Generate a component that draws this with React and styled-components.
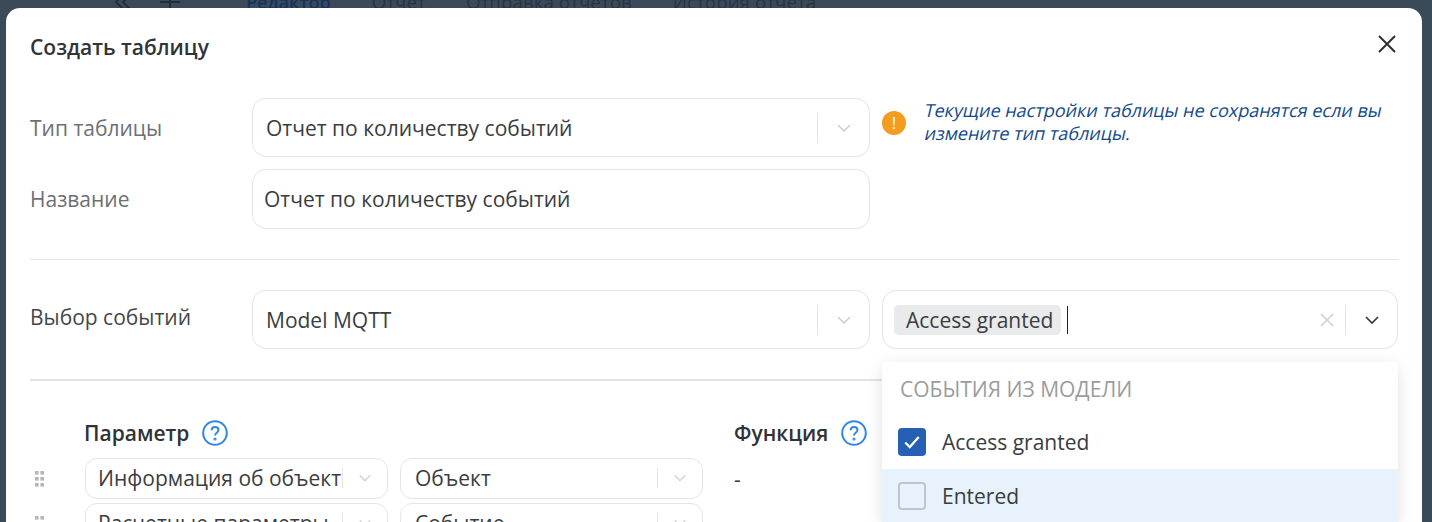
import React from 'react'
import styled, { createGlobalStyle } from 'styled-components'

const Global = createGlobalStyle`
  html, body {
    margin: 0;
    padding: 0;
    background: #3b4a59;
  }
  body {
    font-family: "Open Sans", "Liberation Sans", sans-serif;
    color: #33363a;
  }
`

const Page = styled.div`
  position: relative;
  width: 1432px;
  height: 522px;
  overflow: hidden;
  background: #3b4a59;
`

const BackTabs = styled.div`
  position: absolute;
  top: -10px;
  left: 0;
  display: flex;
  align-items: center;
  font-size: 18.8px;
  line-height: 24px;
  color: #222f3b;
`

const BackIcon = styled.svg`
  width: 24px;
  height: 24px;
  fill: none;
  stroke: #222f3b;
  stroke-width: 2;
  margin-left: ${p => p.$left}px;
`

const BackTab = styled.span`
  margin-left: ${p => p.$left}px;
  font-size: ${p => (p.$active ? '18px' : '18.8px')};
  font-weight: ${p => (p.$active ? 600 : 400)};
  color: ${p => (p.$active ? '#14345f' : '#263442')};
`

const Modal = styled.div`
  position: absolute;
  top: 8px;
  left: 6px;
  width: 1416px;
  height: 560px;
  box-sizing: border-box;
  padding: 0 24px;
  background: #fff;
  border-radius: 14px;
`

const Header = styled.div`
  display: flex;
  align-items: center;
  justify-content: space-between;
  height: 90px;
  padding-bottom: 12px;
  box-sizing: border-box;
`

const Title = styled.h2`
  margin: 0;
  font-size: 21px;
  font-weight: 600;
  color: #303337;
`

const Close = styled.svg`
  width: 18px;
  height: 18px;
  margin: -6px 2px 0 0;
  stroke: #2c2f33;
  stroke-width: 2;
  fill: none;
`

const Row = styled.div`
  display: grid;
  grid-template-columns: 222px 618px 528px;
  align-items: center;
  margin-bottom: ${p => p.$gap || 0}px;
`

const Label = styled.div`
  font-size: 21px;
  color: ${p => p.$dark ? '#44474b' : '#6c7075'};
  margin-top: ${p => p.$shift || 0}px;
`

const Field = styled.div`
  display: flex;
  align-items: center;
  box-sizing: border-box;
  height: ${p => p.$h || 59}px;
  border: 1px solid #e4e5e7;
  border-radius: ${p => p.$r || 14}px;
  background: #fff;
  padding-left: ${p => p.$pl || 13}px;
  font-size: 21px;
  color: #3a3d41;
  white-space: nowrap;
  overflow: hidden;
`

const FieldText = styled.span`
  flex: 1;
  min-width: 0;
  overflow: hidden;
`

const Sep = styled.span`
  flex: none;
  width: 1px;
  height: ${p => p.$h || 30}px;
  background: #e4e5e7;
`

const Chevron = styled.svg`
  flex: none;
  width: ${p => p.$s || 16}px;
  height: ${p => p.$s || 16}px;
  margin: 0 ${p => p.$m || 17}px 0 ${p => p.$m || 18}px;
  fill: none;
  stroke: ${p => p.$dark ? '#33363a' : '#c9cbce'};
  stroke-width: ${p => p.$dark ? 1.6 : 1.4};
`

const Note = styled.div`
  display: flex;
  align-items: center;
  margin-left: 12px;
`

const WarnIcon = styled.div`
  flex: none;
  width: 24px;
  height: 24px;
  border-radius: 50%;
  background: #f39c1f;
  color: #fff;
  font-size: 17px;
  font-weight: 400;
  line-height: 24px;
  text-align: center;
  position: relative;
  top: -5px;
`

const NoteText = styled.div`
  margin-left: 19px;
  font-size: 18px;
  line-height: 23px;
  color: #114a8b;
  position: relative;
  top: -6px;
`

/* reference text is a slanted regular face, not the real italic */
const NoteLine = styled.span`
  display: block;
  width: max-content;
  transform: skewX(-13deg);
  transform-origin: left center;
`

const Divider = styled.hr`
  margin: ${p => p.$strong ? '30px 0 29px' : '30px 0'};
  border: 0;
  height: ${p => p.$strong ? 2 : 1}px;
  background: ${p => p.$strong ? '#e2e3e5' : '#e4e5e7'};
`

const MultiWrap = styled.div`
  position: relative;
  margin-left: 12px;
`

const Multi = styled(Field)`
  padding-left: 11px;
  overflow: visible;
`

const Tag = styled.span`
  flex: none;
  height: 30px;
  line-height: 30px;
  padding: 0 8px 0 12px;
  border-radius: 5px;
  background: #e9eaeb;
`

const Caret = styled.span`
  flex: none;
  width: 1px;
  height: 28px;
  margin-left: 6px;
  background: #222;
`

const Spacer = styled.span`
  flex: 1;
`

const ClearIcon = styled.svg`
  flex: none;
  width: 14px;
  height: 14px;
  margin-right: 11px;
  stroke: #c9cbce;
  stroke-width: 1.4;
  fill: none;
`

const Menu = styled.div`
  position: absolute;
  top: 72px;
  left: 0;
  right: 0;
  background: #fff;
  box-shadow: 0 4px 16px rgba(40, 50, 60, 0.14);
  border-radius: 4px 4px 0 0;
`

const MenuHead = styled.div`
  padding: 12px 18px 0;
  height: 53px;
  box-sizing: border-box;
  font-size: 21px;
  line-height: 30px;
  color: #9a9c9e;
`

const Option = styled.div`
  display: flex;
  align-items: center;
  height: 54px;
  padding-left: 16px;
  font-size: 21px;
  color: #3a3d41;
  background: ${p => p.$hover ? '#e8f2fc' : '#fff'};
`

const Check = styled.span`
  flex: none;
  display: flex;
  align-items: center;
  justify-content: center;
  box-sizing: border-box;
  width: 28px;
  height: 28px;
  margin-right: 16px;
  border-radius: 4px;
  background: ${p => p.$on ? '#2560b4' : 'transparent'};
  border: ${p => p.$on ? 'none' : '2px solid #bcc5d0'};
`

const CheckMark = styled.svg`
  width: 18px;
  height: 18px;
  fill: none;
  stroke: #fff;
  stroke-width: 2;
`

const ParamHead = styled.div`
  display: grid;
  grid-template-columns: 650px auto;
  padding-left: 54px;
  margin-top: 39px;
  height: 38px;
`

const HeadCell = styled.div`
  display: flex;
  align-items: center;
  height: 26px;
  font-size: 21px;
  font-weight: 600;
  color: #303337;
`

const Help = styled.svg`
  width: 26px;
  height: 26px;
  margin-left: 13px;
  fill: none;
  stroke: #2f86e6;
  stroke-width: 2;
`

const ParamRow = styled.div`
  display: grid;
  grid-template-columns: 55px 303px 315px auto;
  align-items: center;
  height: 41px;
  margin-bottom: 4px;
`

const Grip = styled.svg`
  width: 9px;
  height: 16px;
  margin-left: 5px;
  fill: #b4b6b9;
`

const SmallSelect = styled(Field)`
  margin-left: ${p => p.$ml || 0}px;
  padding-bottom: 1px;
`

const Dash = styled.div`
  margin-left: 31px;
  font-size: 21px;
  color: #3a3d41;
`

const ChevronIcon = ({ dark, s, m }) => (
  <Chevron viewBox="0 0 16 16" $dark={dark} $s={s} $m={m}>
    <path d="M2 5l6 6 6-6" />
  </Chevron>
)

const HelpIcon = () => (
  <Help viewBox="0 0 26 26">
    <circle cx="13" cy="13" r="11.8" />
    <path d="M9.6 10.2c0-2 1.5-3.3 3.5-3.3s3.4 1.2 3.4 3c0 2.8-3.5 2.8-3.5 5.6" />
    <circle cx="13" cy="19" r="0.6" />
  </Help>
)

const GripIcon = () => (
  <Grip viewBox="0 0 9 16">
    <rect x="0" y="0" width="3.6" height="3.6" />
    <rect x="5.4" y="0" width="3.6" height="3.6" />
    <rect x="0" y="6" width="3.6" height="3.6" />
    <rect x="5.4" y="6" width="3.6" height="3.6" />
    <rect x="0" y="12" width="3.6" height="3.6" />
    <rect x="5.4" y="12" width="3.6" height="3.6" />
  </Grip>
)

const params = [
  { first: 'Информация об объекте', second: 'Объект', fn: '-' },
  { first: 'Расчетные параметры', second: 'Событие' },
]

export default function App() {
  return (
    <Page>
      <Global />
      <BackTabs>
        <BackIcon $left={110} viewBox="0 0 24 24">
          <path d="M13 5l-7 7 7 7M20 5l-7 7 7 7" />
        </BackIcon>
        <BackIcon $left={24} viewBox="0 0 24 24">
          <path d="M12 2v20M2 12h20" />
        </BackIcon>
        <BackTab $left={64} $active>Редактор</BackTab>
        <BackTab $left={41}>Отчет</BackTab>
        <BackTab $left={40}>Отправка отчетов</BackTab>
        <BackTab $left={41}>История отчета</BackTab>
      </BackTabs>
      <Modal>
        <Header>
          <Title>Создать таблицу</Title>
          <Close viewBox="0 0 18 18">
            <path d="M1 1l16 16M17 1L1 17" />
          </Close>
        </Header>

        <Row $gap={12}>
          <Label>Тип таблицы</Label>
          <Field>
            <FieldText>Отчет по количеству событий</FieldText>
            <Sep />
            <ChevronIcon />
          </Field>
          <Note>
            <WarnIcon>!</WarnIcon>
            <NoteText>
              <NoteLine>Текущие настройки таблицы не сохранятся если вы</NoteLine>
              <NoteLine>измените тип таблицы.</NoteLine>
            </NoteText>
          </Note>
        </Row>
        <Row>
          <Label>Название</Label>
          <Field $h={60} $pl={11}>Отчет по количеству событий</Field>
        </Row>

        <Divider />

        <Row>
          <Label $dark $shift={-5}>Выбор событий</Label>
          <Field>
            <FieldText>Model MQTT</FieldText>
            <Sep />
            <ChevronIcon />
          </Field>
          <MultiWrap>
            <Multi>
              <Tag>Access granted</Tag>
              <Caret />
              <Spacer />
              <ClearIcon viewBox="0 0 14 14">
                <path d="M1 1l12 12M13 1L1 13" />
              </ClearIcon>
              <Sep />
              <ChevronIcon dark />
            </Multi>
            <Menu>
              <MenuHead>СОБЫТИЯ ИЗ МОДЕЛИ</MenuHead>
              <Option>
                <Check $on>
                  <CheckMark viewBox="0 0 16 16">
                    <path d="M2 8.5l4 4 8-9" />
                  </CheckMark>
                </Check>
                Access granted
              </Option>
              <Option $hover>
                <Check />
                Entered
              </Option>
            </Menu>
          </MultiWrap>
        </Row>

        <Divider $strong />

        <ParamHead>
          <HeadCell>Параметр<HelpIcon /></HeadCell>
          <HeadCell>Функция<HelpIcon /></HeadCell>
        </ParamHead>
        {params.map(p => (
          <ParamRow key={p.second}>
            <GripIcon />
            <SmallSelect $h={41} $r={12} $pl={12}>
              <FieldText>{p.first}</FieldText>
              <Sep $h={20} />
              <ChevronIcon s={14} m={15} />
            </SmallSelect>
            <SmallSelect $h={41} $r={12} $ml={12} $pl={14}>
              <FieldText>{p.second}</FieldText>
              <Sep $h={20} />
              <ChevronIcon s={14} m={15} />
            </SmallSelect>
            {p.fn && <Dash>{p.fn}</Dash>}
          </ParamRow>
        ))}
      </Modal>
    </Page>
  )
}
